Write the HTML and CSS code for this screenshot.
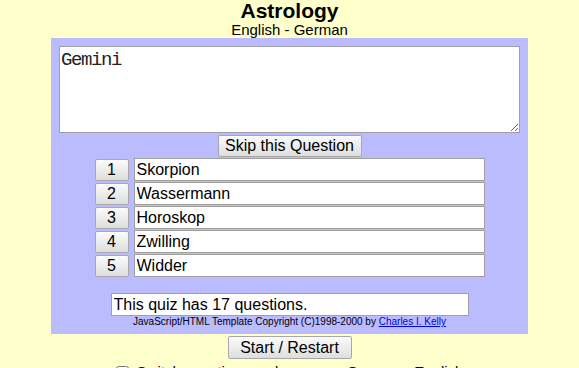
FILE: index.html
```html
<!DOCTYPE html>
<html>
<head>
<meta charset="utf-8">
<title>Astrology</title>
<link rel="stylesheet" href="styles.css">
</head>
<body>
<div class="page">
  <div class="title">Astrology</div>
  <div class="subtitle">English - German</div>
  <div class="panel">
    <textarea class="question">Gemini</textarea>
    <button class="btn skip">Skip this Question</button>
    <div class="answers">
      <div class="row"><button class="btn num">1</button><input class="ans" value="Skorpion"></div>
      <div class="row"><button class="btn num">2</button><input class="ans" value="Wassermann"></div>
      <div class="row"><button class="btn num">3</button><input class="ans" value="Horoskop"></div>
      <div class="row"><button class="btn num">4</button><input class="ans" value="Zwilling"></div>
      <div class="row"><button class="btn num">5</button><input class="ans" value="Widder"></div>
    </div>
    <input class="status" value="This quiz has 17 questions.">
    <div class="copy">JavaScript/HTML Template Copyright (C)1998-2000 by <a href="#">Charles I. Kelly</a></div>
  </div>
  <button class="btn start">Start / Restart</button>
  <label class="switch"><input type="checkbox" class="chk"> Switch questions and answers: German - English</label>
</div>
</body>
</html>
```
FILE: styles.css
```css
html, body {
  margin: 0;
  padding: 0;
  background: #ffffcc;
  overflow: hidden;
}
.page {
  display: flex;
  flex-direction: column;
  align-items: center;
  font-family: "Liberation Sans", Arial, sans-serif;
  color: #000;
}
.title {
  font-weight: bold;
  font-size: 21px;
  line-height: 22px;
  height: 22px;
}
.subtitle {
  font-size: 15px;
  line-height: 16px;
  height: 16px;
}
.panel {
  width: 477px;
  box-sizing: border-box;
  background: #bbbbff;
  padding: 8px 8px 7px;
  display: flex;
  flex-direction: column;
  align-items: center;
}
.question {
  width: 461px;
  height: 87px;
  box-sizing: border-box;
  margin: 0;
  border: 1px solid #a0a0a0;
  background: #fff;
  padding: 2px 1px;
  font-family: "Liberation Mono", "DejaVu Sans Mono", monospace;
  font-size: 19px;
  line-height: 22px;
  letter-spacing: -1.4px;
  color: #222;
}
.btn {
  font-family: "Liberation Sans", Arial, sans-serif;
  font-size: 16px;
  color: #000;
  background: linear-gradient(#fbfbfb, #dedede);
  border: 1px solid #a8a8a8;
  border-radius: 2px;
  padding: 0;
  margin: 0;
  box-sizing: border-box;
}
.skip {
  margin-top: 2px;
  width: 144px;
  height: 22px;
  line-height: 20px;
}
.answers {
  margin-top: 1px;
  display: flex;
  flex-direction: column;
  gap: 1px;
}
.row {
  display: flex;
  align-items: center;
  gap: 5px;
  height: 23px;
}
.num {
  width: 34px;
  height: 22px;
  line-height: 20px;
}
.ans {
  width: 351px;
  height: 23px;
  box-sizing: border-box;
  margin: 0;
  border: 1px solid #a0a0a0;
  padding: 0 2px;
  font-family: "Liberation Sans", Arial, sans-serif;
  font-size: 16px;
  color: #000;
  background: #fff;
}
.status {
  margin-top: 16px;
  width: 358px;
  height: 23px;
  box-sizing: border-box;
  border: 1px solid #a0a0a0;
  padding: 0 2px;
  font-family: "Liberation Sans", Arial, sans-serif;
  font-size: 16px;
  color: #000;
  background: #fff;
}
.copy {
  font-size: 10px;
  line-height: 11px;
  height: 11px;
  white-space: nowrap;
}
.copy a {
  color: #0000ee;
}
.start {
  margin-top: 2px;
  width: 124px;
  height: 23px;
  line-height: 21px;
}
.switch {
  margin-top: 3px;
  font-size: 15px;
  line-height: 20px;
  display: flex;
  align-items: center;
  gap: 8px;
  white-space: nowrap;
}
.chk {
  margin: 0;
  width: 13px;
  height: 13px;
}
```
